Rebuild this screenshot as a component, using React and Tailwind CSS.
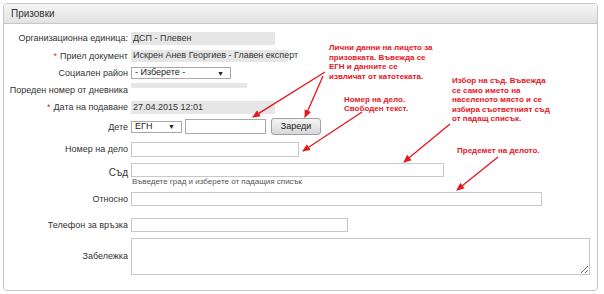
import React from "react";

const F = "font-['Liberation_Sans',Arial,sans-serif]";

function Label({ children, req, className = "" }) {
  return (
    <div className={`w-[127px] shrink-0 text-right pr-[3px] text-[9px] leading-[11px] text-[#333] whitespace-nowrap ${className}`}>
      {req && <span className="text-[#e03030] mr-[3px]">*</span>}
      {children}
    </div>
  );
}

function SelectBox({ w, text }) {
  return (
    <div className={`${w} h-full border border-[#a9a9a9] bg-white flex items-center justify-between pl-[3px] pr-[6px] text-[9px] text-[#222]`}>
      <span>{text}</span>
      <span className="text-[7px] leading-none">▼</span>
    </div>
  );
}

function Input({ w, h = "h-full" }) {
  return <div className={`${w} ${h} border border-[#c8c8c8] bg-white`} />;
}

export default function App() {
  return (
    <div className={`relative w-[604px] h-[294px] bg-white ${F} overflow-hidden`}>
      <div className="ml-[3px] mt-[3px] w-[595px] h-[288px] border border-[#c8c8c8] rounded-[4px] overflow-hidden">
        <div className="h-[20px] border-b border-[#c8c8c8] bg-gradient-to-b from-[#f6f6f6] to-[#e2e2e2] flex items-center pl-[7px] text-[10px] text-[#333]">
          Призовки
        </div>
        <div className="flex flex-col">
          {/* Org */}
          <div className="mt-[8px] h-[13px] flex items-center">
            <Label>Организационна единица:</Label>
            <div className="w-[144px] h-full bg-[#e6e6e6] flex items-center pl-[2px] text-[9px] text-[#333]">ДСП - Плевен</div>
          </div>
          {/* Приел */}
          <div className="mt-[5px] h-[12px] flex items-center">
            <Label req>Приел документ</Label>
            <div className="w-[157px] h-full bg-[#e6e6e6] flex items-center pl-[2px] text-[9px] text-[#333] whitespace-nowrap">Искрен Анев Георгиев - Главен експерт</div>
          </div>
          {/* Социален */}
          <div className="mt-[5px] h-[12px] flex items-center">
            <Label>Социален район</Label>
            <SelectBox w="w-[100px]" text="- Изберете -" />
          </div>
          {/* Пореден */}
          <div className="mt-[4px] h-[12px] flex items-center">
            <Label className="pt-[2px]">Пореден номер от дневника</Label>
            <div className="w-[116px] h-[5px] bg-[#e6e6e6] self-start" />
          </div>
          {/* Дата */}
          <div className="mt-[6px] h-[13px] flex items-center">
            <Label req>Дата на подаване</Label>
            <div className="w-[144px] h-full bg-[#e6e6e6] flex items-center pl-[2px] text-[9px] text-[#333]">27.04.2015 12:01</div>
          </div>
          {/* Дете */}
          <div className="mt-[4px] h-[17px] flex items-center">
            <Label className="pt-[2px]">Дете</Label>
            <div className="h-[12px] flex">
              <SelectBox w="w-[51px]" text="ЕГН" />
            </div>
            <div className="ml-[3px] w-[81px] h-[15px] border border-[#a9a9a9] bg-white" />
            <div className="ml-[5px] w-[50px] h-[17px] border border-[#a0a0a0] rounded-[3px] bg-gradient-to-b from-[#f4f4f4] to-[#d8d8d8] flex items-center justify-center text-[9px] text-[#222]">Зареди</div>
          </div>
          {/* Номер */}
          <div className="mt-[7px] h-[15px] flex items-center">
            <Label>Номер на дело</Label>
            <Input w="w-[168px]" />
          </div>
          {/* Съд */}
          <div className="mt-[6px] flex">
            <Label className="pt-[4px] text-[10px]">Съд</Label>
            <div className="flex flex-col">
              <Input w="w-[313px]" h="h-[14px]" />
              <div className="text-[8px] leading-[10px] text-[#555] pl-[1px]">Въведете град и изберете от падащия списък</div>
            </div>
          </div>
          {/* Относно */}
          <div className="mt-[5px] h-[14px] flex items-center">
            <Label>Относно</Label>
            <Input w="w-[411px]" />
          </div>
          {/* Телефон */}
          <div className="mt-[12px] h-[14px] flex items-center">
            <Label>Телефон за връзка</Label>
            <Input w="w-[217px]" />
          </div>
          {/* Забележка */}
          <div className="mt-[6px] h-[37px] flex items-center">
            <Label>Забележка</Label>
            <textarea className="w-[459px] h-full border border-[#c8c8c8] bg-white outline-none" />
          </div>
        </div>
      </div>

      {/* Annotations */}
      <div className="absolute left-[329px] top-[43px] text-[8px] leading-[9.5px] font-bold text-[#e8141e] whitespace-nowrap">
        Лични данни на лицето за<br />призовката. Въвежда се<br />ЕГН и данните се<br />извличат от катотеката.
      </div>
      <div className="absolute left-[344px] top-[95px] text-[8px] leading-[9px] font-bold text-[#e8141e] whitespace-nowrap">
        Номер на дело.<br />Свободен текст.
      </div>
      <div className="absolute left-[452px] top-[76px] text-[8px] leading-[9.5px] font-bold text-[#e8141e] whitespace-nowrap">
        Избор на съд. Въвежда<br />се само името на<br />населеното място и се<br />избира съответният съд<br />от падащ списък.
      </div>
      <div className="absolute left-[457px] top-[146px] text-[8px] leading-[9px] font-bold text-[#e8141e] whitespace-nowrap">
        Предемет на делото.
      </div>

      <svg className="absolute inset-0 pointer-events-none" width="604" height="294" viewBox="0 0 604 294">
        <defs>
          <marker id="ah" markerWidth="8" markerHeight="8" refX="7" refY="4" orient="auto" markerUnits="userSpaceOnUse">
            <path d="M0,0.5 L8,4 L0,7.5 Z" fill="#e8141e" />
          </marker>
        </defs>
        <g stroke="#e8141e" strokeWidth="1.3" fill="none">
          <line x1="325" y1="72" x2="253" y2="117" markerEnd="url(#ah)" />
          <line x1="323" y1="76" x2="305" y2="117" markerEnd="url(#ah)" />
          <line x1="362" y1="112" x2="303" y2="151" markerEnd="url(#ah)" />
          <line x1="450" y1="124" x2="404" y2="162" markerEnd="url(#ah)" />
          <line x1="498" y1="157" x2="457" y2="190" markerEnd="url(#ah)" />
        </g>
      </svg>
    </div>
  );
}
